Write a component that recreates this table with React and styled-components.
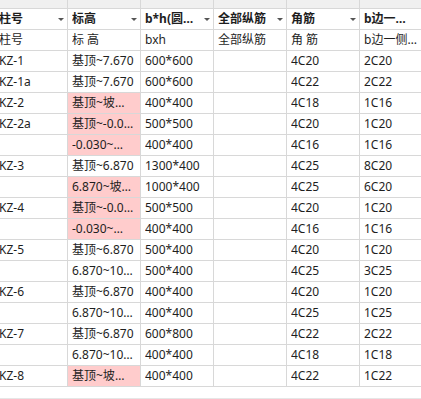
import React from 'react';
import styled, { createGlobalStyle } from 'styled-components';

const GlobalStyle = createGlobalStyle`
  html, body {
    margin: 0;
    padding: 0;
    background: #ffffff;
    overflow: hidden;
  }
  body {
    font-family: "Noto Sans", "Noto Sans CJK SC", sans-serif;
    font-size: 12px;
    color: #1e1e1e;
  }
`;

const Grid = styled.div`
  width: 421px;
  height: 399px;
  overflow: hidden;
  background: #ffffff;
  display: flex;
  flex-direction: column;
`;

const Row = styled.div`
  display: grid;
  grid-template-columns: repeat(6, 73px);
  margin-left: -5px;
  height: ${(p) => p.$h || 21}px;
  background: ${(p) => (p.$strip ? '#f0f0f0' : '#ffffff')};
  flex-shrink: 0;
`;

const Cell = styled.div`
  box-sizing: border-box;
  border-right: 1px solid #d8d8d8;
  border-bottom: 1px solid #d8d8d8;
  background: ${(p) => (p.$warn ? '#ffcccc' : 'transparent')};
  padding: 0 3px 0 4px;
  display: flex;
  align-items: center;
  overflow: hidden;
  white-space: nowrap;
  font-weight: ${(p) => (p.$bold ? 700 : 400)};
`;

const CellText = styled.span`
  flex: 1;
  min-width: 0;
  padding-right: 3px;
  overflow: hidden;
  text-overflow: ellipsis;
  line-height: 20px;
`;

const Arrow = styled.span`
  flex-shrink: 0;
  width: 0;
  height: 0;
  margin-left: 3px;
  border-left: 3px solid transparent;
  border-right: 3px solid transparent;
  border-top: 3px solid #555555;
`;

const Filler = styled.div`
  flex: 1;
  border-bottom: 1px solid #e6e6e6;
`;

const headers = ['柱号', '标高', 'b*h(圆柱直径)', '全部纵筋', '角筋', 'b边一侧中部筋'];
const sub = ['柱号', '标 高', 'bxh', '全部纵筋', '角 筋', 'b边一侧中部筋'];

const rows = [
  ['KZ-1', '基顶~7.670', '600*600', '', '4C20', '2C20'],
  ['KZ-1a', '基顶~7.670', '600*600', '', '4C22', '2C22'],
  ['KZ-2', '基顶~坡屋面', '400*400', '', '4C18', '1C16', true],
  ['KZ-2a', '基顶~-0.030', '500*500', '', '4C20', '1C20', true],
  ['', '-0.030~坡屋面', '400*400', '', '4C16', '1C16', true],
  ['KZ-3', '基顶~6.870', '1300*400', '', '4C25', '8C20'],
  ['', '6.870~坡屋面', '1000*400', '', '4C25', '6C20', true],
  ['KZ-4', '基顶~-0.030', '500*500', '', '4C20', '1C20', true],
  ['', '-0.030~坡屋面', '400*400', '', '4C16', '1C16', true],
  ['KZ-5', '基顶~6.870', '500*400', '', '4C20', '1C20'],
  ['', '6.870~10.470', '500*400', '', '4C25', '3C25'],
  ['KZ-6', '基顶~6.870', '400*400', '', '4C20', '1C20'],
  ['', '6.870~10.470', '400*400', '', '4C25', '1C25'],
  ['KZ-7', '基顶~6.870', '600*800', '', '4C22', '2C22'],
  ['', '6.870~10.470', '400*400', '', '4C18', '1C18'],
  ['KZ-8', '基顶~坡屋面', '400*400', '', '4C22', '1C22', true],
];

export default function App() {
  return (
    <>
      <GlobalStyle />
      <Grid>
        <Row $h={9} $strip>
          {headers.map((h) => (
            <Cell key={h} />
          ))}
        </Row>
        <Row>
          {headers.map((h) => (
            <Cell key={h} $bold>
              <CellText>{h}</CellText>
              <Arrow />
            </Cell>
          ))}
        </Row>
        <Row>
          {sub.map((s, i) => (
            <Cell key={i}>
              <CellText>{s}</CellText>
            </Cell>
          ))}
        </Row>
        {rows.map((r, ri) => (
          <Row key={ri}>
            {r.slice(0, 6).map((v, ci) => (
              <Cell key={ci} $warn={r[6] && ci === 1}>
                <CellText>{v}</CellText>
              </Cell>
            ))}
          </Row>
        ))}
        <Filler />
      </Grid>
    </>
  );
}
